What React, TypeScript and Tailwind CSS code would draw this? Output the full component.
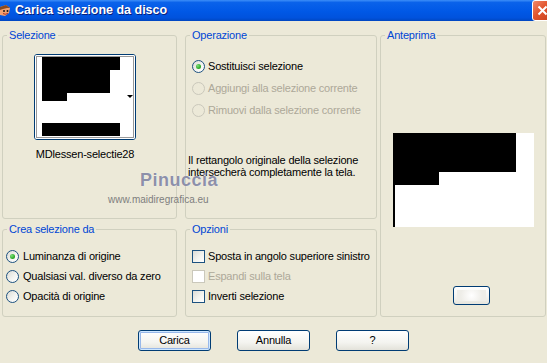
import React from 'react';

const font = "font-['Liberation_Sans',Arial,sans-serif]";

function Radio({ checked = false, disabled = false }: { checked?: boolean; disabled?: boolean }) {
  return (
    <span
      className={`flex h-[13px] w-[13px] shrink-0 items-center justify-center rounded-full border ${
        disabled
          ? 'border-[#CAC8BB] bg-[#ECE9D8]'
          : 'border-[#1C5180] bg-[linear-gradient(135deg,#DCDCD5_0%,#F5F5F2_60%,#FFFFFF_100%)]'
      }`}
    >
      {checked && (
        <span className="h-[5px] w-[5px] rounded-full bg-[radial-gradient(circle_at_35%_35%,#7CE07A_0%,#2EAB2B_60%,#1C8A1A_100%)]" />
      )}
    </span>
  );
}

function Check({ disabled = false }: { disabled?: boolean }) {
  return (
    <span
      className={`block h-[13px] w-[13px] shrink-0 border ${
        disabled
          ? 'border-[#CAC8BB] bg-white'
          : 'border-[#1C5180] bg-[linear-gradient(135deg,#DCDCD7_0%,#F3F3EF_55%,#FFFFFF_100%)]'
      }`}
    />
  );
}

function Group({ title, className, children }: { title: string; className: string; children?: React.ReactNode }) {
  return (
    <fieldset className={`rounded-[3px] border border-[#D0D0BF] ${className}`}>
      <legend className="ml-[4px] px-[2px] leading-[14px] text-[#0046D5]">{title}</legend>
      {children}
    </fieldset>
  );
}

function XpButton({ label, isDefault = false }: { label: string; isDefault?: boolean }) {
  return (
    <button
      className={`h-[21px] w-[73px] rounded-[3px] border border-[#003C74] bg-[linear-gradient(to_bottom,#FFFFFF_0%,#F4F4F0_60%,#E3E2DA_100%)] text-[11px] leading-[19px] text-black ${
        isDefault ? 'shadow-[inset_0_0_0_1px_#CEE7FF,inset_0_0_0_2px_#98B8EA]' : ''
      }`}
    >
      {label}
    </button>
  );
}

export default function App() {
  return (
    <div
      className={`relative h-[363px] w-[547px] overflow-hidden whitespace-nowrap bg-[#ECE9D8] text-[11px] tracking-[-0.2px] text-black ${font}`}
    >
      {/* barra del titolo */}
      <div className="flex h-[21px] items-center bg-[linear-gradient(to_bottom,#3D8EF8_0%,#0A62EA_12%,#0058E6_55%,#0052DD_85%,#0046C0_100%)]">
        <svg width="12" height="14" viewBox="0 0 12 14" className="shrink-0">
          <path d="M0 3 L6 1 L10 4 L9 9 L5 12 L0 11 Z" fill="#F0A070" />
          <path d="M0 3 L6 1 L10 4 L7 4 L3 5 L0 6 Z" fill="#8A4A20" />
          <circle cx="4" cy="7" r="1" fill="#1A1A1A" />
          <circle cx="7.5" cy="7" r="1" fill="#1A1A1A" />
          <path d="M3 9.5 Q5 11 8 9.5" stroke="#B03020" strokeWidth="1" fill="none" />
        </svg>
        <span className="ml-[3px] text-[12.5px] font-bold tracking-[0px] text-white [text-shadow:1px_1px_0_#0A1E7A]">
          Carica selezione da disco
        </span>
        <div className="ml-auto -mr-[6px] flex h-[21px] w-[21px] shrink-0 items-center justify-center rounded-[3px] border border-white bg-[linear-gradient(135deg,#F0896B_0%,#E2552E_45%,#C8401C_100%)]">
          <svg width="11" height="11" viewBox="0 0 11 11">
            <path d="M1.5 1.5 L9.5 9.5 M9.5 1.5 L1.5 9.5" stroke="white" strokeWidth="2" />
          </svg>
        </div>
      </div>

      <div className="flex pl-[2px] pt-[7px]">
        {/* colonna 1 */}
        <div className="flex w-[175px] shrink-0 flex-col">
          <Group title="Selezione" className="h-[191px]">
            <div className="ml-[31px] mt-[12px] flex w-[102px] flex-col items-center">
              <div className="h-[86px] w-[102px] overflow-hidden rounded-[3px] border border-[#003C74] bg-white">
                <svg width="100" height="84" viewBox="1 1 100 84" className="block">
                  <rect x="0" y="0" width="102" height="86" fill="white" />
                  <rect x="2.5" y="2.5" width="97" height="81" fill="none" stroke="#333" strokeWidth="1" strokeDasharray="1 1" />
                  <path d="M8 3 H86 V16 H76 V39 H33 V47 H8 Z" fill="black" />
                  <rect x="8" y="69" width="78" height="13" fill="black" />
                  <path d="M93 41 H99 L96 44 Z" fill="black" />
                </svg>
              </div>
              <div className="mt-[8px] leading-[13px]">MDlessen-selectie28</div>
            </div>
          </Group>
          <Group title="Crea selezione da" className="mt-[3px] h-[95px]">
            <div className="mt-[10px] flex flex-col pl-[3px]">
              <label className="flex h-[20px] items-center gap-[4px]">
                <Radio checked />
                <span>Luminanza di origine</span>
              </label>
              <label className="flex h-[20px] items-center gap-[4px]">
                <Radio />
                <span>Qualsiasi val. diverso da zero</span>
              </label>
              <label className="flex h-[20px] items-center gap-[4px]">
                <Radio />
                <span>Opacità di origine</span>
              </label>
            </div>
          </Group>
        </div>

        {/* colonna 2 */}
        <div className="ml-[8px] flex w-[192px] shrink-0 flex-col">
          <Group title="Operazione" className="h-[191px]">
            <div className="mt-[13px] flex flex-col pl-[6px]">
              <label className="flex h-[22px] items-center gap-[3px]">
                <Radio checked />
                <span>Sostituisci selezione</span>
              </label>
              <label className="flex h-[22px] items-center gap-[3px] text-[#ACA899]">
                <Radio disabled />
                <span>Aggiungi alla selezione corrente</span>
              </label>
              <label className="flex h-[22px] items-center gap-[3px] text-[#ACA899]">
                <Radio disabled />
                <span>Rimuovi dalla selezione corrente</span>
              </label>
            </div>
            <p className="mt-[33px] pl-[2px] leading-[12px]">
              Il rettangolo originale della selezione
              <br />
              intersecherà completamente la tela.
            </p>
          </Group>
          <Group title="Opzioni" className="mt-[3px] h-[95px]">
            <div className="mt-[10px] flex flex-col pl-[6px]">
              <label className="flex h-[20px] items-center gap-[3px]">
                <Check />
                <span>Sposta in angolo superiore sinistro</span>
              </label>
              <label className="flex h-[20px] items-center gap-[3px] text-[#ACA899]">
                <Check disabled />
                <span>Espandi sulla tela</span>
              </label>
              <label className="flex h-[20px] items-center gap-[3px]">
                <Check />
                <span>Inverti selezione</span>
              </label>
            </div>
          </Group>
        </div>

        {/* colonna 3 */}
        <Group title="Anteprima" className="ml-[3px] h-[289px] w-[166px] shrink-0">
          <div className="ml-[12px] mt-[91px]">
            <svg width="141" height="94" viewBox="0 0 141 94" className="block">
              <rect width="141" height="94" fill="white" />
              <path d="M0 0 H123 V39 H46 V52 H2 V94 H0 Z" fill="black" />
            </svg>
          </div>
          <div className="ml-[72px] mt-[59px] h-[19px] w-[37px] rounded-[3px] border border-[#003C74] bg-[linear-gradient(to_bottom,#FFFFFF_0%,#F2F2EE_60%,#E6E5DD_100%)] p-[3px]">
            <div className="h-full w-full bg-[radial-gradient(circle,#FFFFFF_0%,#EEEDE8_70%)]" />
          </div>
        </Group>
      </div>

      {/* pulsanti */}
      <div className="mt-[13px] flex justify-center gap-[26px]">
        <XpButton label="Carica" isDefault />
        <XpButton label="Annulla" />
        <XpButton label="?" />
      </div>

      {/* filigrana */}
      <div className="pointer-events-none absolute left-[108px] top-[171px] flex flex-col items-start">
        <span className="ml-[32px] text-[18px] font-semibold leading-[19px] tracking-[0.5px] text-[#8D90A9] [text-shadow:0_0_1px_#FFFFFF]">
          Pinuccia
        </span>
        <span className="mt-[4px] text-[10px] leading-[12px] tracking-[0px] text-[#7E7E7E]">
          www.maidiregrafica.eu
        </span>
      </div>
    </div>
  );
}
